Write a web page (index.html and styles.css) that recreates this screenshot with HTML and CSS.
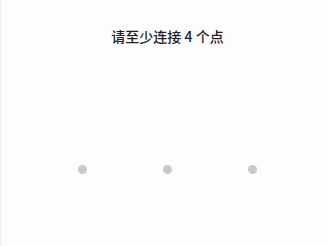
FILE: index.html
```html
<!DOCTYPE html>
<html lang="zh">
<head>
<meta charset="utf-8">
<link rel="stylesheet" href="styles.css">
</head>
<body>
<div class="page">
  <div class="title">请至少连接 4 个点</div>
  <div class="pad">
    <span class="dot"></span>
    <span class="dot"></span>
    <span class="dot"></span>
  </div>
</div>
</body>
</html>
```
FILE: styles.css
```css
html, body {
  margin: 0;
  padding: 0;
  background: #fdfdfd;
}
.page {
  width: 329px;
  height: 246px;
  box-sizing: border-box;
  border-left: 2px solid #f3f3f3;
  font-family: "Noto Sans CJK SC", "Noto Sans", sans-serif;
}
.title {
  padding-top: 26px;
  text-align: center;
  font-size: 14px;
  line-height: 20px;
  color: #222;
  font-weight: 500;
  padding-left: 4px;
}
.pad {
  margin-top: 119px;
  display: grid;
  grid-template-columns: repeat(3, 85px);
  justify-content: center;
  padding-left: 4px;
  justify-items: center;
}
.dot {
  width: 9px;
  height: 9px;
  border-radius: 50%;
  background: #c9c9c9;
}
```
